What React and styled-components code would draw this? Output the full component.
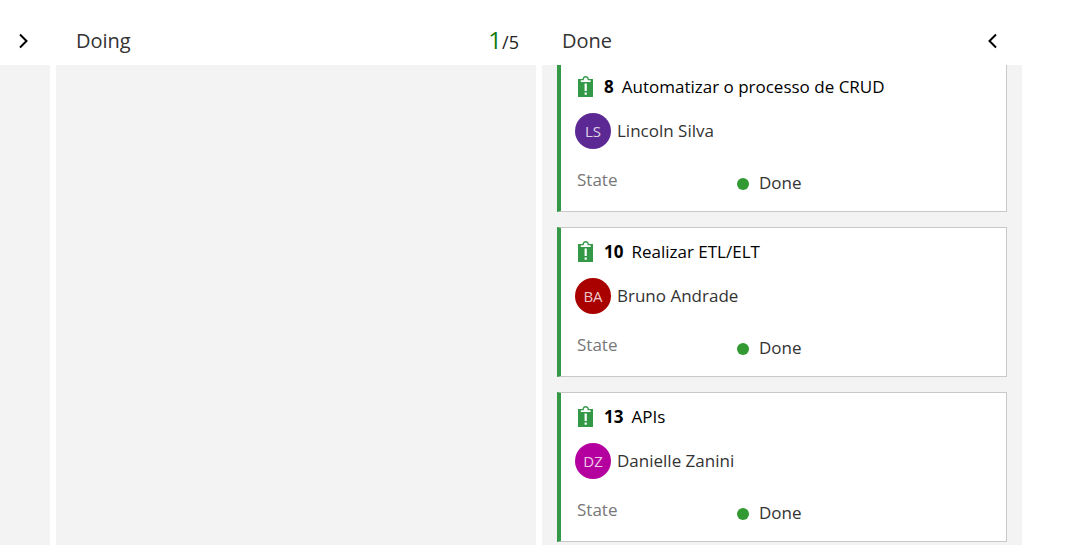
import React from "react";
import styled, { createGlobalStyle } from "styled-components";

const GlobalStyle = createGlobalStyle`
  * { box-sizing: border-box; }
  body {
    margin: 0;
    background: #fff;
    color: #333;
    font-family: "Segoe UI", "Open Sans", "Noto Sans", sans-serif;
    font-size: 17px;
    line-height: 24px;
  }
`;

const Board = styled.main`
  display: grid;
  grid-template-columns: 50px minmax(0, 1fr) minmax(0, 1fr);
  column-gap: 6px;
  height: 100vh;
  padding-right: 52px;
  overflow: hidden;
`;

const Column = styled.section`
  display: flex;
  flex-direction: column;
  min-height: 0;
`;

const ColumnHeader = styled.header`
  display: flex;
  flex: none;
  align-items: center;
  justify-content: ${(p) => (p.$narrow ? "center" : "space-between")};
  height: 65px;
  padding: ${(p) => (p.$narrow ? "16px 2px 0 0" : "16px 17px 0 20px")};
`;

const ColumnTitle = styled.h2`
  margin: 0;
  font-size: 20px;
  font-weight: 400;
  line-height: 28px;
`;

const Limit = styled.span`
  color: #222;
  font-size: 18px;
  line-height: 28px;
`;

const Count = styled.span`
  color: #107c10;
  font-size: 24px;
`;

const ToggleButton = styled.button`
  display: flex;
  align-items: center;
  justify-content: center;
  width: 26px;
  height: 28px;
  padding: 0;
  border: 0;
  background: none;
  color: #000;
  cursor: pointer;
`;

const Lane = styled.div`
  flex: 1;
  min-height: 0;
  padding: 0 15px;
  overflow: hidden;
  background: #f3f3f3;
`;

const CardList = styled.ul`
  display: flex;
  flex-direction: column;
  gap: 15px;
  margin: -3px 0 0;
  padding: 0;
  list-style: none;
`;

const CardItem = styled.li`
  height: 150px;
  padding: 11px 14px 0;
  border: 1px solid #c8c8c8;
  border-left: 4px solid #339947;
  background: #fff;
`;

const TitleRow = styled.div`
  display: flex;
  align-items: center;
  height: 26px;
  padding-left: 2px;
`;

const CardId = styled.strong`
  margin: 0 8px 0 10px;
  color: #000;
  font-weight: 700;
`;

const CardLink = styled.a`
  color: #000;
  text-decoration: none;
`;

const Assignee = styled.div`
  display: flex;
  align-items: center;
  gap: 6px;
  margin-top: 13px;
`;

const Avatar = styled.span`
  display: flex;
  align-items: center;
  justify-content: center;
  width: 36px;
  height: 36px;
  border-radius: 50%;
  background: ${(p) => p.$color};
  color: rgba(255, 255, 255, 0.8);
  font-size: 15px;
`;

const Field = styled.div`
  display: grid;
  grid-template-columns: 160px 1fr;
  margin-top: 19px;
  padding-left: 2px;
`;

const FieldLabel = styled.span`
  color: #777;
`;

const FieldValue = styled.span`
  display: flex;
  align-items: center;
  gap: 10px;
  padding-top: 3px;
`;

const StateDot = styled.span`
  width: 12px;
  height: 12px;
  margin-top: 2px;
  border-radius: 50%;
  background: #339933;
`;

function Chevron({ left }) {
  return (
    <svg width="10" height="16" viewBox="0 0 10 16" fill="none" stroke="currentColor" strokeWidth="2" aria-hidden="true">
      <path d={left ? "M9 1.500 2.500 8 9 14.500" : "M1 1.500 7.500 8 1 14.500"} />
    </svg>
  );
}

function IssueIcon() {
  return (
    <svg width="17" height="24" viewBox="0 0 17 24" aria-hidden="true">
      <path fill="#339947" d="M1 4h4.500C5.800 2 7 1 8.700 1s2.900 1 3.200 3H16v18H1z" />
      <path fill="#fff" d="M3.800 5.300h3V4.500c0-1.300.8-2.100 1.900-2.100s1.900.8 1.900 2.100v.8h3V7H3.800z" />
      <path fill="#fff" d="M7.600 8.500h2.200v7.500H7.600zM7.600 17.500h2.200v2.200H7.600z" />
    </svg>
  );
}

const cards = [
  { id: 8, title: "Automatizar o processo de CRUD", name: "Lincoln Silva", initials: "LS", color: "#5c2893" },
  { id: 10, title: "Realizar ETL/ELT", name: "Bruno Andrade", initials: "BA", color: "#a90000" },
  { id: 13, title: "APIs", name: "Danielle Zanini", initials: "DZ", color: "#b4009e" },
];

function Card({ card }) {
  return (
    <CardItem>
      <TitleRow>
        <IssueIcon />
        <CardId>{card.id}</CardId>
        <CardLink href={`#${card.id}`}>{card.title}</CardLink>
      </TitleRow>
      <Assignee>
        <Avatar $color={card.color}>{card.initials}</Avatar>
        <span>{card.name}</span>
      </Assignee>
      <Field>
        <FieldLabel>State</FieldLabel>
        <FieldValue>
          <StateDot />
          Done
        </FieldValue>
      </Field>
    </CardItem>
  );
}

export default function App() {
  return (
    <>
      <GlobalStyle />
      <Board>
        <Column>
          <ColumnHeader $narrow>
            <ToggleButton type="button" aria-label="Expand column">
              <Chevron />
            </ToggleButton>
          </ColumnHeader>
          <Lane />
        </Column>
        <Column>
          <ColumnHeader>
            <ColumnTitle>Doing</ColumnTitle>
            <Limit>
              <Count>1</Count>/5
            </Limit>
          </ColumnHeader>
          <Lane />
        </Column>
        <Column>
          <ColumnHeader>
            <ColumnTitle>Done</ColumnTitle>
            <ToggleButton type="button" aria-label="Collapse column">
              <Chevron left />
            </ToggleButton>
          </ColumnHeader>
          <Lane>
            <CardList>
              {cards.map((card) => (
                <Card key={card.id} card={card} />
              ))}
            </CardList>
          </Lane>
        </Column>
      </Board>
    </>
  );
}
